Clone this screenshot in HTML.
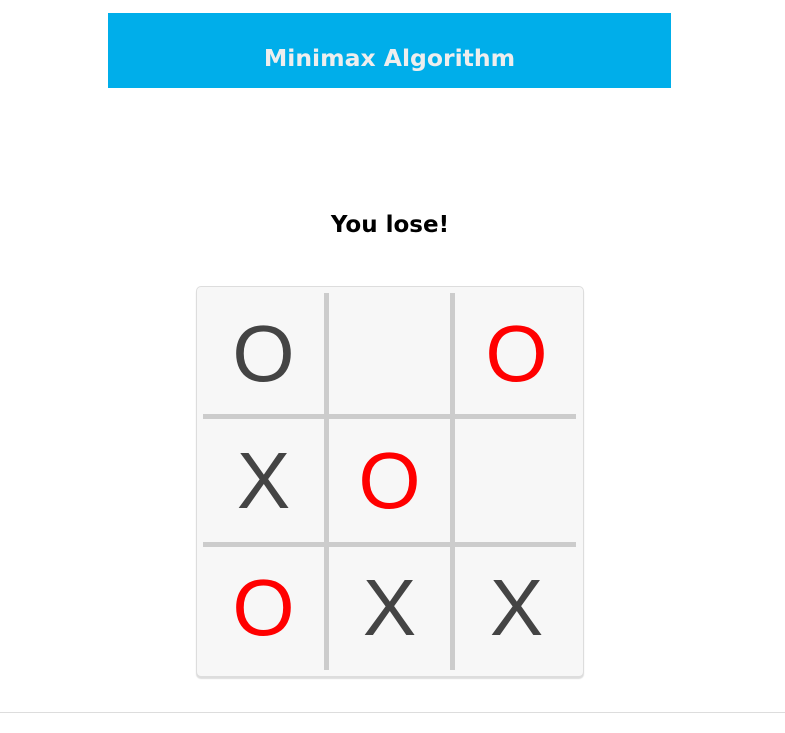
<!DOCTYPE html>
<html><head><style>
body{margin:0;width:785px;height:733px;background:#fff;position:relative;overflow:hidden;font-family:"DejaVu Sans",sans-serif}
.hdr{position:absolute;left:108px;top:13px;width:563px;height:75px;background:#00AEEA;color:#eee;font-weight:bold;font-size:23.5px;text-align:center;line-height:90px}
.msg{position:absolute;left:0;width:780px;top:210px;text-align:center;font-weight:bold;font-size:23px;line-height:30px;color:#000}
.board{position:absolute;left:196px;top:286px;width:386px;height:389px;background:#f7f7f7;border:1px solid #ddd;border-radius:5px;box-shadow:0 2px 1px #ddd}
.v,.h{position:absolute;background:#ccc}
.c{position:absolute;width:121px;height:121px;text-align:center;font-family:"Liberation Sans",sans-serif;font-size:80px;line-height:121px;color:#444}
.r{color:#f00}
.line{position:absolute;left:0;top:712px;width:785px;height:1px;background:#ddd}
</style></head><body>
<div class="hdr">Minimax Algorithm</div>
<div class="msg">You lose!</div>
<div class="board">
<div class="v" style="left:127px;top:6px;width:5px;height:377px"></div>
<div class="v" style="left:253px;top:6px;width:5px;height:377px"></div>
<div class="h" style="left:6px;top:127px;width:373px;height:5px"></div>
<div class="h" style="left:6px;top:255px;width:373px;height:5px"></div>
<div class="c" style="left:6px;top:6px">O</div>
<div class="c r" style="left:259px;top:6px">O</div>
<div class="c" style="left:6px;top:133px">X</div>
<div class="c r" style="left:132px;top:133px">O</div>
<div class="c r" style="left:6px;top:260px">O</div>
<div class="c" style="left:132px;top:260px">X</div>
<div class="c" style="left:259px;top:260px">X</div>
</div>
<div class="line"></div>
</body></html>
